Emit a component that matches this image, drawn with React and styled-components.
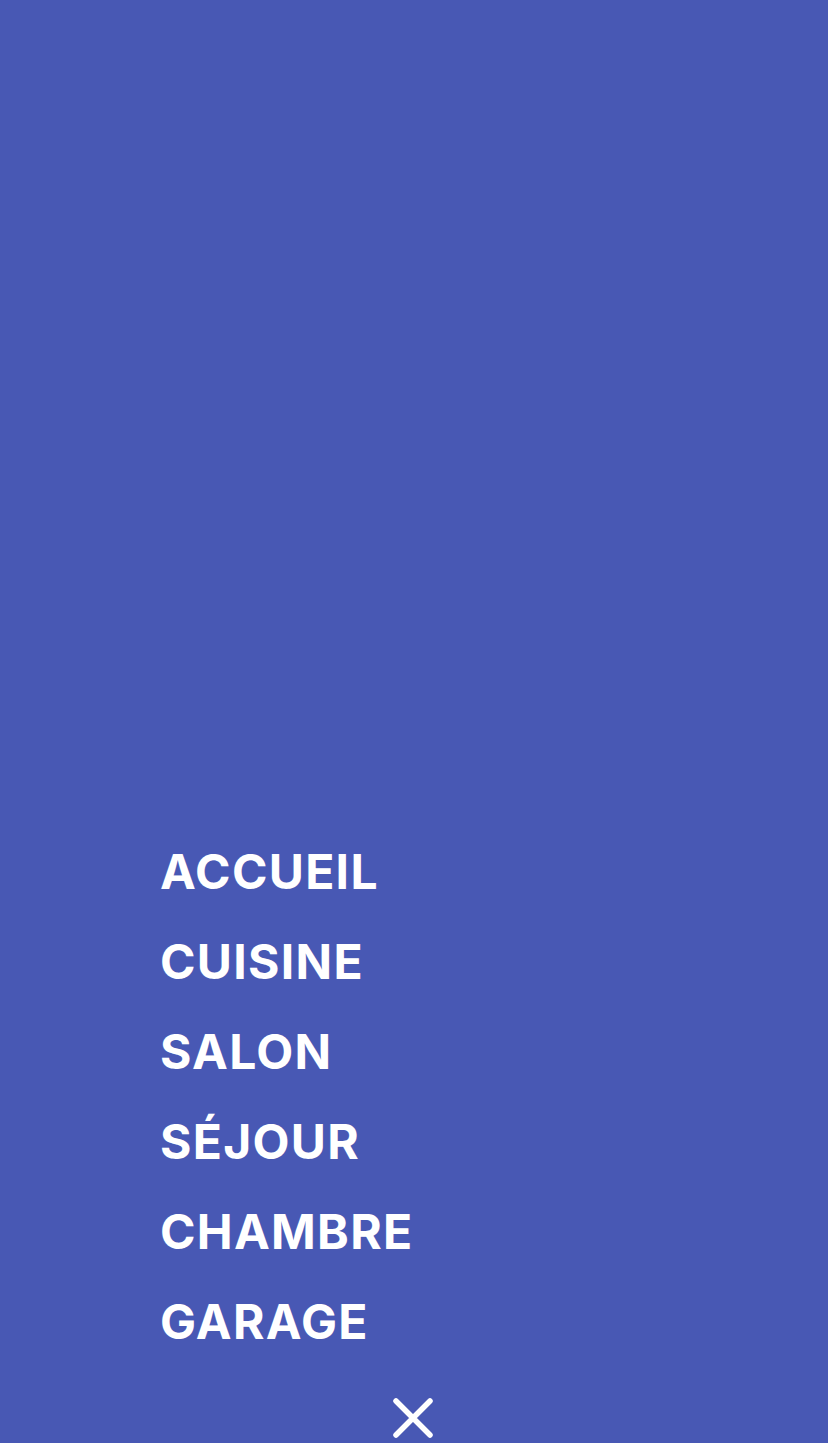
import React from 'react';
import styled, { createGlobalStyle } from 'styled-components';

const GlobalStyle = createGlobalStyle`
  html, body {
    margin: 0;
    padding: 0;
    background-color: #4858b4;
  }
  * {
    box-sizing: border-box;
  }
`;

const Screen = styled.div`
  min-height: 1443px;
  display: flex;
  flex-direction: column;
  justify-content: flex-end;
  background-color: #4858b4;
  font-family: Inter, "Liberation Sans", Arial, sans-serif;
`;

const Menu = styled.ul`
  list-style: none;
  margin: 0;
  padding: 0 0 0 160px;
`;

const MenuItem = styled.li`
  color: #fff;
  font-size: 48px;
  font-weight: 700;
  line-height: 90px;
  letter-spacing: 1.3px;
  cursor: pointer;
`;

const CloseButton = styled.button`
  align-self: center;
  width: 44px;
  height: 44px;
  margin: 30px 0 2px;
  padding: 0;
  border: none;
  background: transparent;
  display: flex;
  align-items: center;
  justify-content: center;
  cursor: pointer;
`;

const items = ['ACCUEIL', 'CUISINE', 'SALON', 'SÉJOUR', 'CHAMBRE', 'GARAGE'];

function App() {
  return (
    <>
      <GlobalStyle />
      <Screen>
        <Menu>
          {items.map((item) => (
            <MenuItem key={item}>{item}</MenuItem>
          ))}
        </Menu>
        <CloseButton aria-label="Fermer">
          <svg width="44" height="44" viewBox="0 0 44 44">
            <path
              d="M4 4 L38 38 M38 4 L4 38"
              stroke="#fff"
              strokeWidth="5.5"
              strokeLinecap="round"
            />
          </svg>
        </CloseButton>
      </Screen>
    </>
  );
}

export default App;
